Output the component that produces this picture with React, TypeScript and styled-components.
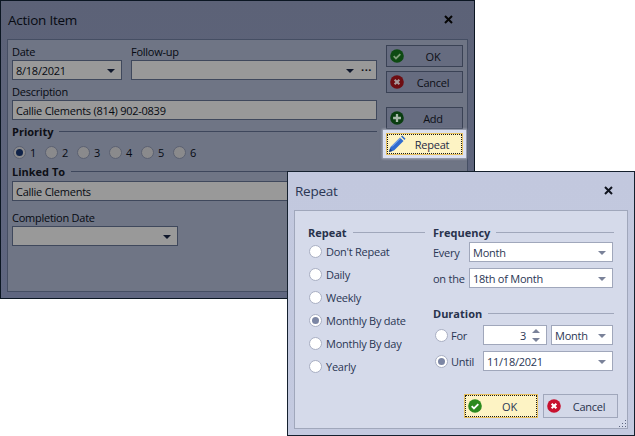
import React from "react";
import styled, { createGlobalStyle, ThemeProvider } from "styled-components";

const dimTheme = {
  titleBg: "linear-gradient(#5c6277, #5f6680)",
  outer: "#0b1622",
  panelBg: "#6f7585",
  panelBorder: "#454e63",
  text: "#060a12",
  heading: "#0d0f16",
  line: "#3e475c",
  fieldBg: "#999999",
  fieldBorder: "#3f485c",
  arrow: "#10182c",
  radioBg: "#8a8a8c",
  radioBorder: "#5b6172",
  radioDot: "#0f2248",
  btnBg: "#666c80",
  btnBorder: "#3a4255",
  close: "#050505",
};

const lightTheme = {
  titleBg: "linear-gradient(#c2c8de, #c4cae0)",
  outer: "#14202e",
  panelBg: "#d5daea",
  panelBorder: "#a0a7bb",
  text: "#2a3654",
  heading: "#28324c",
  line: "#a0a7bb",
  fieldBg: "#ffffff",
  fieldBorder: "#a0a7bb",
  arrow: "#7a8299",
  radioBg: "#ffffff",
  radioBorder: "#a9afc3",
  radioDot: "#7c86a4",
  btnBg: "#d3d8e8",
  btnBorder: "#a0a7bb",
  close: "#10141f",
};

const GlobalStyle = createGlobalStyle`
  html, body {
    margin: 0;
    padding: 0;
    width: 635px;
    height: 436px;
    background: #ffffff;
    overflow: hidden;
  }
  body {
    font-family: "Open Sans", "Noto Sans", sans-serif;
    font-size: 11px;
    letter-spacing: -0.25px;
  }
`;

const Desktop = styled.div`
  position: relative;
  width: 635px;
  height: 436px;
`;

const Window = styled.div<{ $left: number; $top: number; $width: number; $height: number }>`
  position: absolute;
  left: ${(p) => p.$left}px;
  top: ${(p) => p.$top}px;
  width: ${(p) => p.$width}px;
  height: ${(p) => p.$height}px;
  box-sizing: border-box;
  border: 1px solid ${(p) => p.theme.outer};
  background: ${(p) => p.theme.titleBg};
  display: flex;
  flex-direction: column;
  padding: 0 6px 6px;
`;

const TitleBar = styled.div`
  flex: 0 0 38px;
  display: flex;
  align-items: center;
  justify-content: space-between;
  padding: 0 15px 0 1px;
`;

const Title = styled.div`
  font-size: 13.5px;
  color: ${(p) => p.theme.text};
`;

const Panel = styled.div`
  flex: 1;
  min-height: 0;
  position: relative;
  box-sizing: border-box;
  background: ${(p) => p.theme.panelBg};
  border: 1px solid ${(p) => p.theme.panelBorder};
`;

const MainPanel = styled(Panel)`
  display: flex;
  padding: 4px 3px 0 4px;
  gap: 9px;
`;

const LeftColumn = styled.div`
  width: 365px;
  display: flex;
  flex-direction: column;
`;

const RightColumn = styled.div`
  width: 77px;
  display: flex;
  flex-direction: column;
  gap: 4px;
  padding-top: 1px;
`;

const Row = styled.div`
  display: flex;
  gap: 9px;
`;

const Stack = styled.div<{ $width?: number; $top?: number; $grow?: boolean }>`
  display: flex;
  flex-direction: column;
  width: ${(p) => (p.$width ? `${p.$width}px` : "auto")};
  flex: ${(p) => (p.$grow ? "1 1 0" : "none")};
  margin-top: ${(p) => p.$top ?? 0}px;
`;

const Label = styled.label`
  height: 16px;
  line-height: 16px;
  color: ${(p) => p.theme.text};
  white-space: nowrap;
`;

const Field = styled.div<{ $width?: number }>`
  box-sizing: border-box;
  height: 20px;
  width: ${(p) => (p.$width ? `${p.$width}px` : "auto")};
  flex: ${(p) => (p.$width ? "none" : "1 1 20px")};
  min-width: 0;
  display: flex;
  align-items: center;
  padding: 0 5px 0 3px;
  background: ${(p) => p.theme.fieldBg};
  border: 1px solid ${(p) => p.theme.fieldBorder};
  color: ${(p) => p.theme.text};
  white-space: nowrap;
`;

const FieldText = styled.span<{ $right?: boolean }>`
  flex: 1;
  text-align: ${(p) => (p.$right ? "right" : "left")};
  padding-right: ${(p) => (p.$right ? 6 : 0)}px;
`;

const Arrow = styled.span`
  width: 0;
  height: 0;
  border-left: 4px solid transparent;
  border-right: 4px solid transparent;
  border-top: 4px solid ${(p) => p.theme.arrow};
  margin: 1px 1px 0 0;
`;

const Dots = styled.span`
  font-size: 11px;
  font-weight: 700;
  letter-spacing: 0.5px;
  line-height: 10px;
  margin: 0 -1px 0 6px;
  color: ${(p) => p.theme.heading};
`;

const SpinButtons = styled.span`
  display: flex;
  flex-direction: column;
  gap: 5px;
  margin-right: 1px;
`;

const SpinUp = styled.span`
  width: 0;
  height: 0;
  border-left: 4px solid transparent;
  border-right: 4px solid transparent;
  border-bottom: 4px solid ${(p) => p.theme.arrow};
`;

const SpinDown = styled(Arrow)`
  margin: 0;
`;

const GroupHeading = styled.div<{ $top?: number }>`
  display: flex;
  align-items: center;
  gap: 6px;
  height: 16px;
  margin-top: ${(p) => p.$top ?? 0}px;
  font-weight: 700;
  letter-spacing: 0;
  color: ${(p) => p.theme.heading};
  white-space: nowrap;

  &::after {
    content: "";
    flex: 1;
    height: 1px;
    background: ${(p) => p.theme.line};
  }
`;

const RadioRow = styled.div`
  display: flex;
  margin-top: 3px;
  height: 20px;
  padding-left: 1px;
  align-items: center;
`;

const RadioItem = styled.div`
  display: flex;
  align-items: center;
  gap: 4px;
  color: ${(p) => p.theme.text};
`;

const PriorityItem = styled(RadioItem)`
  width: 32px;
`;

const RadioCircle = styled.span<{ $on?: boolean }>`
  box-sizing: border-box;
  width: 13px;
  height: 13px;
  border-radius: 50%;
  flex: none;
  display: flex;
  align-items: center;
  justify-content: center;
  background: ${(p) => p.theme.radioBg};
  border: 1px solid ${(p) => p.theme.radioBorder};

  &::after {
    content: "";
    display: ${(p) => (p.$on ? "block" : "none")};
    width: 7px;
    height: 7px;
    border-radius: 50%;
    background: ${(p) => p.theme.radioDot};
  }
`;

const Button = styled.div<{ $width?: number; $height?: number; $focus?: boolean }>`
  position: relative;
  box-sizing: border-box;
  width: ${(p) => p.$width ?? 77}px;
  height: ${(p) => p.$height ?? 22}px;
  display: flex;
  align-items: center;
  padding-left: 3px;
  color: ${(p) => (p.$focus ? p.theme.text : p.theme.heading)};
  background: ${(p) => (p.$focus ? "#fdf3c4" : p.theme.btnBg)};
  border: 1px solid ${(p) => (p.$focus ? "#e8c15f" : p.theme.btnBorder)};
  outline: ${(p) => (p.$focus ? "1px dotted #1a1a1a" : "none")};
  outline-offset: -2px;
`;

const ButtonGlow = styled(Button)`
  color: #1f2a44;
  box-shadow: 0 0 0 3px #dbe0f0, 0 0 2px 4px rgba(219, 224, 240, 0.5);
`;

const ButtonLabel = styled.span`
  flex: 1;
  text-align: center;
`;

const Spacer = styled.div<{ $size: number }>`
  height: ${(p) => p.$size}px;
`;

const RepeatPanel = styled(Panel)`
  display: grid;
  grid-template-columns: 117px 181px;
  column-gap: 8px;
  align-content: start;
  padding: 13px 0 0 13px;
`;

const RepeatOptions = styled.div`
  display: flex;
  flex-direction: column;
`;

const OptionList = styled.div`
  display: flex;
  flex-direction: column;
  gap: 10px;
  margin-top: 5px;
  padding-left: 1px;
`;

const OptionItem = styled(RadioItem)`
  height: 13px;
`;

const OptionsRight = styled.div`
  display: flex;
  flex-direction: column;
`;

const FormRow = styled.div<{ $top?: number }>`
  display: flex;
  align-items: center;
  margin-top: ${(p) => p.$top ?? 0}px;
  margin-right: 1px;
  gap: 4px;
  color: ${(p) => p.theme.text};
`;

const RowLabel = styled.span`
  width: 32px;
  flex: none;
  white-space: nowrap;
`;

const DurationRadio = styled(OptionItem)`
  width: 46px;
  flex: none;
  padding-left: 2px;
  gap: 3px;
  box-sizing: border-box;
`;

const Footer = styled.div`
  position: absolute;
  right: 9px;
  bottom: 10px;
  display: flex;
  gap: 5px;
`;

const Grip = styled.svg`
  position: absolute;
  right: 0;
  bottom: 0;
`;

const CloseIcon = () => (
  <svg width="9" height="9" viewBox="0 0 9 9">
    <path d="M1 1l7 7M8 1L1 8" stroke="currentColor" strokeWidth="2" />
  </svg>
);

const CloseBox = styled.span`
  display: flex;
  margin-top: -2px;
  color: ${(p) => p.theme.close};
`;

const StatusIcon = ({ kind, bg, fg, size = 14 }: { kind: "ok" | "cancel" | "add"; bg: string; fg: string; size?: number }) => (
  <svg width={size} height={size} viewBox="0 0 16 16" style={{ flex: "none" }}>
    <circle cx="8" cy="8" r="7.8" fill={bg} />
    {kind === "ok" && <path d="M4.2 8.2l2.6 2.6 5-5" fill="none" stroke={fg} strokeWidth="2" />}
    {kind === "cancel" && <path d="M5.3 5.3l5.4 5.4M10.7 5.3l-5.4 5.4" fill="none" stroke={fg} strokeWidth="2.4" />}
    {kind === "add" && <path d="M8 3.5v9M3.5 8h9" fill="none" stroke={fg} strokeWidth="2.6" />}
  </svg>
);

const PencilIcon = () => (
  <svg width="18" height="18" viewBox="0 0 18 18" style={{ flex: "none", margin: "0 -4px 0 -2px" }}>
    <path d="M1 17l1.5-5L12 2.5l3.5 3.5L6 15.500z" fill="#2f6bd0" />
    <path d="M13 1.500l1.200-1 3.300 3.300-1 1.200z" fill="#2f6bd0" />
    <path d="M4 11.500L12.500 3" stroke="#9cc0f2" strokeWidth="1" />
    <path d="M1 17l1-3.500 2.500 2.500z" fill="#1c3f80" />
  </svg>
);

const priorities = [1, 2, 3, 4, 5, 6];
const repeatOptions = ["Don't Repeat", "Daily", "Weekly", "Monthly By date", "Monthly By day", "Yearly"];

const ActionItemWindow = () => (
  <ThemeProvider theme={dimTheme}>
    <Window $left={0} $top={0} $width={475} $height={299}>
      <TitleBar>
        <Title>Action Item</Title>
        <CloseBox>
          <CloseIcon />
        </CloseBox>
      </TitleBar>
      <MainPanel>
        <LeftColumn>
          <Row>
            <Stack $width={110}>
              <Label>Date</Label>
              <Field>
                <FieldText>8/18/2021</FieldText>
                <Arrow />
              </Field>
            </Stack>
            <Stack $grow>
              <Label>Follow-up</Label>
              <Field>
                <FieldText />
                <Arrow />
                <Dots>···</Dots>
              </Field>
            </Stack>
          </Row>
          <Stack $top={4}>
            <Label>Description</Label>
            <Field>Callie Clements (814) 902-0839</Field>
          </Stack>
          <GroupHeading $top={3}>Priority</GroupHeading>
          <RadioRow>
            {priorities.map((n) => (
              <PriorityItem key={n}>
                <RadioCircle $on={n === 1} />
                {n}
              </PriorityItem>
            ))}
          </RadioRow>
          <GroupHeading $top={1}>Linked To</GroupHeading>
          <Stack $top={2}>
            <Field>Callie Clements</Field>
          </Stack>
          <Stack $top={9} $width={166}>
            <Label>Completion Date</Label>
            <Field>
              <FieldText />
              <Arrow />
            </Field>
          </Stack>
        </LeftColumn>
        <RightColumn>
          <Button>
            <StatusIcon kind="ok" bg="#0d4a12" fg="#7d9c78" />
            <ButtonLabel>OK</ButtonLabel>
          </Button>
          <Button>
            <StatusIcon kind="cancel" bg="#6e0d12" fg="#a99a9c" />
            <ButtonLabel>Cancel</ButtonLabel>
          </Button>
          <Spacer $size={6} />
          <Button>
            <StatusIcon kind="add" bg="#0a3d10" fg="#a8b8aa" />
            <ButtonLabel>Add</ButtonLabel>
          </Button>
          <ButtonGlow $focus>
            <PencilIcon />
            <ButtonLabel>Repeat</ButtonLabel>
          </ButtonGlow>
        </RightColumn>
      </MainPanel>
    </Window>
  </ThemeProvider>
);

const RepeatWindow = () => (
  <ThemeProvider theme={lightTheme}>
    <Window $left={287} $top={171} $width={348} $height={265}>
      <TitleBar>
        <Title>Repeat</Title>
        <CloseBox>
          <CloseIcon />
        </CloseBox>
      </TitleBar>
      <RepeatPanel>
        <RepeatOptions>
          <GroupHeading>Repeat</GroupHeading>
          <OptionList>
            {repeatOptions.map((o) => (
              <OptionItem key={o}>
                <RadioCircle $on={o === "Monthly By date"} />
                {o}
              </OptionItem>
            ))}
          </OptionList>
        </RepeatOptions>
        <OptionsRight>
          <GroupHeading>Frequency</GroupHeading>
          <FormRow $top={2}>
            <RowLabel>Every</RowLabel>
            <Field>
              <FieldText>Month</FieldText>
              <Arrow />
            </Field>
          </FormRow>
          <FormRow $top={6}>
            <RowLabel>on the</RowLabel>
            <Field>
              <FieldText>18th of Month</FieldText>
              <Arrow />
            </Field>
          </FormRow>
          <GroupHeading $top={17}>Duration</GroupHeading>
          <FormRow $top={4}>
            <DurationRadio>
              <RadioCircle />
              For
            </DurationRadio>
            <Field $width={64}>
              <FieldText $right>3</FieldText>
              <SpinButtons>
                <SpinUp />
                <SpinDown />
              </SpinButtons>
            </Field>
            <Field>
              <FieldText>Month</FieldText>
              <Arrow />
            </Field>
          </FormRow>
          <FormRow $top={6}>
            <DurationRadio>
              <RadioCircle $on />
              Until
            </DurationRadio>
            <Field>
              <FieldText>11/18/2021</FieldText>
              <Arrow />
            </Field>
          </FormRow>
        </OptionsRight>
        <Footer>
          <Button $width={74} $height={24} $focus>
            <StatusIcon kind="ok" bg="#2c8a1e" fg="#ffffff" />
            <ButtonLabel>OK</ButtonLabel>
          </Button>
          <Button $width={75} $height={24}>
            <StatusIcon kind="cancel" bg="#c8102e" fg="#ffffff" />
            <ButtonLabel>Cancel</ButtonLabel>
          </Button>
        </Footer>
        <Grip width="8" height="8" viewBox="0 0 8 8">
          <path d="M6 0h1v1H6zM3 3h1v1H3zM6 3h1v1H6zM0 6h1v1H0zM3 6h1v1H3zM6 6h1v1H6z" fill="#5c6580" />
        </Grip>
      </RepeatPanel>
    </Window>
  </ThemeProvider>
);

export default function App() {
  return (
    <Desktop>
      <GlobalStyle />
      <ActionItemWindow />
      <RepeatWindow />
    </Desktop>
  );
}
